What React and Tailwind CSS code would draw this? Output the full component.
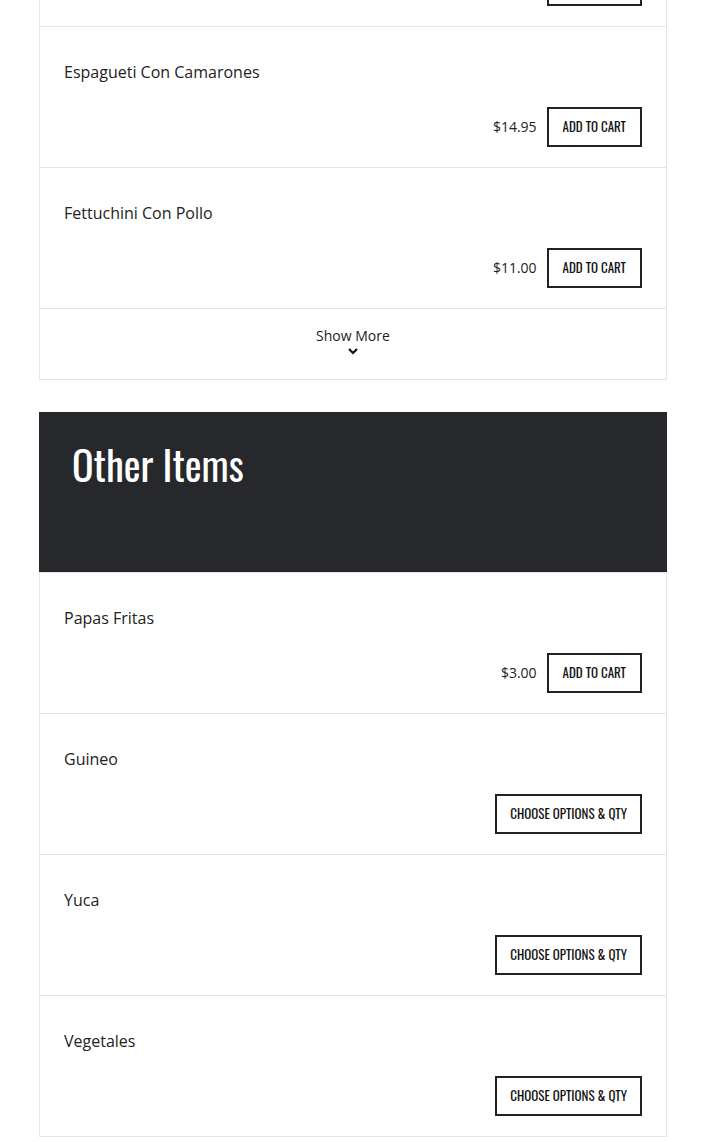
import React from "react";

const condensed = { fontFamily: '"Oswald", "Liberation Sans Narrow", "DejaVu Sans Condensed", sans-serif' };

function ItemRow({ name, price, options }) {
  return (
    <div className="border-b border-[#e6e6e6] px-6 pt-[33px] pb-5">
      <div className="text-base leading-6 text-[#222]">{name}</div>
      <div className="mt-[23px] flex items-center justify-end gap-[10px]">
        {price && <span className="text-sm text-[#222]">{price}</span>}
        <button
          style={condensed}
          className={
            options
              ? "h-10 border-2 border-[#222] bg-white px-[13px] text-[13px] font-normal uppercase text-[#111]"
              : "h-10 border-2 border-[#222] bg-white px-[14px] text-[13px] font-normal uppercase text-[#111]"
          }
        >
          {options ? "Choose Options & Qty" : "Add to Cart"}
        </button>
      </div>
    </div>
  );
}

export default function App() {
  return (
    <div className="min-h-screen bg-white font-['Open_Sans',sans-serif]">
      <div className="mx-[39px] w-[628px] border-x border-[#e6e6e6]">
        <div className="flex h-[27px] items-end justify-end border-b border-[#e6e6e6] px-6 pb-5">
          <div className="h-[7px] w-[95px] border-2 border-t-0 border-[#222]" />
        </div>
        <ItemRow name="Espagueti Con Camarones" price="$14.95" />
        <ItemRow name="Fettuchini Con Pollo" price="$11.00" />
        <div className="flex h-[71px] flex-col items-center border-b border-[#e6e6e6] pt-[17px]">
          <span className="text-sm leading-5 text-[#222]">Show More</span>
          <svg width="12" height="8" viewBox="0 0 12 8" className="mt-[1px]">
            <path d="M2 2l4 4 4-4" fill="none" stroke="#111" strokeWidth="2.2" />
          </svg>
        </div>
      </div>
      <div className="mx-[39px] mt-8 w-[628px]">
        <div className="h-40 bg-[#26282b] pl-[33px] pr-8 pt-[28px]">
          <h2 style={condensed} className="text-[40px] leading-[48px] text-white">
            Other Items
          </h2>
        </div>
        <div className="border-x border-t border-[#e6e6e6]">
          <ItemRow name="Papas Fritas" price="$3.00" />
          <ItemRow name="Guineo" options />
          <ItemRow name="Yuca" options />
          <ItemRow name="Vegetales" options />
        </div>
      </div>
    </div>
  );
}
